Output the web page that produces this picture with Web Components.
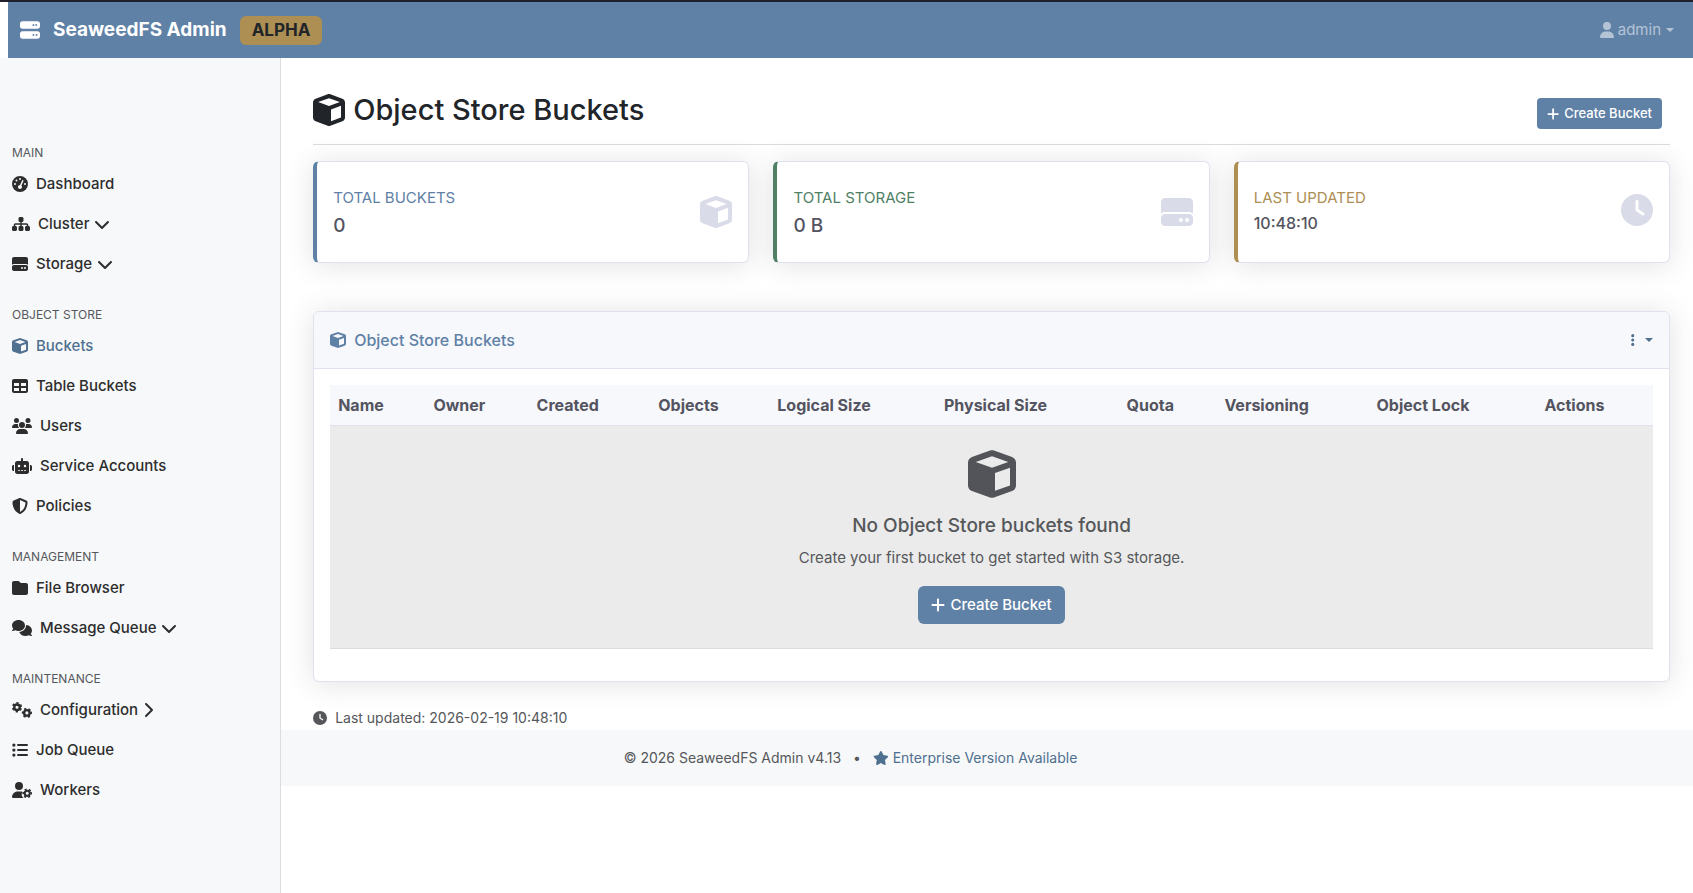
<!DOCTYPE html>
<html lang="en">
<head>
<meta charset="utf-8">
<meta name="viewport" content="width=device-width, initial-scale=1">
<title>SeaweedFS Admin – Object Store Buckets</title>
<style>
  :root {
    --primary: #6081a6;
    --link: #4f708f;
    --success: #4f8066;
    --warning: #ad8e53;
    --ink: #212529;
    --nav-ink: #2d2d2d;
    --muted: #55575a;
    --value: #535460;
    --faint: #d9dbe8;
    --surface: #f7f8fa;
    --card-head: #f7f8fc;
    --card-line: #dfe1ee;
    --line: #d9dce0;
    --card-shadow: 0 2px 28px rgba(58, 59, 69, .15);
  }
  body {
    margin: 0;
    background: #fff;
    color: var(--ink);
    font: 400 15px/24px Inter, "Liberation Sans", sans-serif;
  }
</style>
</head>
<body>
<app-shell>
  <app-header slot="header" user="admin">SeaweedFS Admin</app-header>
  <app-sidebar slot="sidebar">
    <nav-section label="MAIN">
      <nav-item icon="gauge">Dashboard</nav-item>
      <nav-item icon="sitemap" toggle="chevron-down">Cluster</nav-item>
      <nav-item icon="drive" toggle="chevron-down">Storage</nav-item>
    </nav-section>
    <nav-section label="OBJECT STORE">
      <nav-item icon="cube" active>Buckets</nav-item>
      <nav-item icon="table">Table Buckets</nav-item>
      <nav-item icon="users">Users</nav-item>
      <nav-item icon="robot">Service Accounts</nav-item>
      <nav-item icon="shield">Policies</nav-item>
    </nav-section>
    <nav-section label="MANAGEMENT">
      <nav-item icon="folder">File Browser</nav-item>
      <nav-item icon="comments" toggle="chevron-down">Message Queue</nav-item>
    </nav-section>
    <nav-section label="MAINTENANCE">
      <nav-item icon="gears" toggle="chevron-right">Configuration</nav-item>
      <nav-item icon="list">Job Queue</nav-item>
      <nav-item icon="user-gear">Workers</nav-item>
    </nav-section>
  </app-sidebar>
  <page-title slot="main" icon="cube">Object Store Buckets<action-button slot="actions" size="small">Create Bucket</action-button></page-title>
  <stat-row slot="main">
    <stat-card tone="primary" icon="cube" label="TOTAL BUCKETS">0</stat-card>
    <stat-card tone="success" icon="drive" label="TOTAL STORAGE">0 B</stat-card>
    <stat-card tone="warning" icon="clock" label="LAST UPDATED" compact>10:48:10</stat-card>
  </stat-row>
  <bucket-panel slot="main"></bucket-panel>
  <updated-note slot="main">Last updated: 2026-02-19 10:48:10</updated-note>
  <app-footer slot="footer"></app-footer>
</app-shell>

<script>
const ICONS = {
  'cube': [512, '<path d="M234.5 5.7c13.9-5 29.1-5 43.1 0l192 68.6C495 83.4 512 107.5 512 134.6l0 242.9c0 27-17 51.2-42.5 60.3l-192 68.6c-13.9 5-29.1 5-43.1 0l-192-68.6C17 428.6 0 404.5 0 377.4L0 134.6c0-27 17-51.2 42.5-60.3l192-68.6zM256 66L82.3 128 256 190l173.7-62L256 66zm32 368.6l160-57.1 0-188L288 246.6l0 188z"/>'],
  'user': [448, '<path d="M224 256A128 128 0 1 0 224 0a128 128 0 1 0 0 256zm-45.7 48C79.8 304 0 383.8 0 482.3C0 498.7 13.3 512 29.7 512l388.6 0c16.4 0 29.7-13.3 29.7-29.7C448 383.8 368.2 304 269.7 304l-91.4 0z"/>'],
  'server': [512, '<path d="M64 32C28.7 32 0 60.7 0 96l0 64c0 35.3 28.7 64 64 64l384 0c35.3 0 64-28.7 64-64l0-64c0-35.3-28.7-64-64-64L64 32zm280 72a24 24 0 1 1 0 48 24 24 0 1 1 0-48zm48 24a24 24 0 1 1 48 0 24 24 0 1 1-48 0zM64 288c-35.3 0-64 28.7-64 64l0 64c0 35.3 28.7 64 64 64l384 0c35.3 0 64-28.7 64-64l0-64c0-35.3-28.7-64-64-64L64 288zm280 72a24 24 0 1 1 0 48 24 24 0 1 1 0-48zm56 24a24 24 0 1 1 48 0 24 24 0 1 1-48 0z"/>'],
  'drive': [512, '<path d="M0 96C0 60.7 28.7 32 64 32l384 0c35.3 0 64 28.7 64 64l0 184.4c-17-15.2-39.4-24.4-64-24.4L64 256c-24.6 0-47 9.2-64 24.4L0 96zM64 288l384 0c35.3 0 64 28.7 64 64l0 64c0 35.3-28.7 64-64 64L64 480c-35.3 0-64-28.7-64-64l0-64c0-35.3 28.7-64 64-64zM320 416a32 32 0 1 0 0-64 32 32 0 1 0 0 64zm128-32a32 32 0 1 0-64 0 32 32 0 1 0 64 0z"/>'],
  'clock': [512, '<path d="M256 0a256 256 0 1 1 0 512A256 256 0 1 1 256 0zM232 120l0 136c0 8 4 15.5 10.7 20l96 64c11 7.4 25.9 4.4 33.3-6.7s4.4-25.9-6.7-33.3L280 243.2 280 120c0-13.3-10.7-24-24-24s-24 10.7-24 24z"/>'],
  'plus': [448, '<path d="M256 80c0-17.7-14.3-32-32-32s-32 14.3-32 32l0 144L48 224c-17.7 0-32 14.3-32 32s14.3 32 32 32l144 0 0 144c0 17.7 14.3 32 32 32s32-14.3 32-32l0-144 144 0c17.7 0 32-14.3 32-32s-14.3-32-32-32l-144 0 0-144z"/>'],
  'sitemap': [576, '<path fill-rule="nonzero" d="M208 80c0-26.5 21.5-48 48-48l64 0c26.5 0 48 21.5 48 48l0 64c0 26.5-21.5 48-48 48l-8 0 0 40 152 0c30.9 0 56 25.1 56 56l0 32 8 0c26.5 0 48 21.5 48 48l0 64c0 26.5-21.5 48-48 48l-64 0c-26.5 0-48-21.5-48-48l0-64c0-26.5 21.5-48 48-48l8 0 0-32c0-4.4-3.6-8-8-8l-152 0 0 40 8 0c26.5 0 48 21.5 48 48l0 64c0 26.5-21.5 48-48 48l-64 0c-26.5 0-48-21.5-48-48l0-64c0-26.5 21.5-48 48-48l8 0 0-40-152 0c-4.4 0-8 3.6-8 8l0 32 8 0c26.5 0 48 21.5 48 48l0 64c0 26.5-21.5 48-48 48l-64 0c-26.5 0-48-21.5-48-48l0-64c0-26.5 21.5-48 48-48l8 0 0-32c0-30.9 25.1-56 56-56l152 0 0-40-8 0c-26.5 0-48-21.5-48-48l0-64z"/>'],
  'gauge': [512, '<path d="M0 256a256 256 0 1 1 512 0A256 256 0 1 1 0 256zM288 96a32 32 0 1 0-64 0 32 32 0 1 0 64 0zM256 416c35.3 0 64-28.7 64-64c0-17.4-6.9-33.1-18.1-44.6L366 161.7c5.3-12.1-.2-26.3-12.3-31.6s-26.3 .2-31.6 12.3L257.9 288c-.6 0-1.3 0-1.9 0c-35.3 0-64 28.7-64 64s28.7 64 64 64zM176 144a32 32 0 1 0-64 0 32 32 0 1 0 64 0zM96 288a32 32 0 1 0 0-64 32 32 0 1 0 0 64zm352-32a32 32 0 1 0-64 0 32 32 0 1 0 64 0z"/>'],
  'table': [512, '<path d="M64 256l0-96 160 0 0 96L64 256zm0 64l160 0 0 96L64 416l0-96zm224 96l0-96 160 0 0 96-160 0zM448 256l-160 0 0-96 160 0 0 96zM64 32C28.7 32 0 60.7 0 96L0 416c0 35.3 28.7 64 64 64l384 0c35.3 0 64-28.7 64-64l0-320c0-35.3-28.7-64-64-64L64 32z"/>'],
  'users': [640, '<path d="M144 0a80 80 0 1 1 0 160A80 80 0 1 1 144 0zM512 0a80 80 0 1 1 0 160A80 80 0 1 1 512 0zM0 298.7C0 239.8 47.8 192 106.7 192l42.7 0c15.9 0 31 3.5 44.6 9.7c-1.3 7.2-1.9 14.7-1.9 22.3c0 38.2 16.8 72.5 43.3 96L21.3 320C9.6 320 0 310.4 0 298.7zM405.3 320c25.9-23.5 42.6-57.8 42.6-96c0-7.6-.7-15-1.9-22.3c13.6-6.3 28.7-9.7 44.6-9.7l42.7 0C592.2 192 640 239.8 640 298.7c0 11.8-9.6 21.3-21.3 21.3l-213.3 0zM224 224a96 96 0 1 1 192 0 96 96 0 1 1-192 0zM128 485.3C128 411.7 187.7 352 261.3 352l117.3 0C452.3 352 512 411.7 512 485.3c0 14.7-11.9 26.7-26.7 26.7l-330.7 0c-14.7 0-26.7-11.9-26.7-26.7z"/>'],
  'robot': [640, '<path d="M320 0c17.7 0 32 14.3 32 32l0 64 120 0c39.8 0 72 32.2 72 72l0 272c0 39.8-32.2 72-72 72l-304 0c-39.8 0-72-32.2-72-72l0-272c0-39.8 32.2-72 72-72l120 0 0-64c0-17.7 14.3-32 32-32zM208 384c-8.8 0-16 7.2-16 16s7.2 16 16 16l32 0c8.8 0 16-7.2 16-16s-7.2-16-16-16l-32 0zm96 0c-8.8 0-16 7.2-16 16s7.2 16 16 16l32 0c8.8 0 16-7.2 16-16s-7.2-16-16-16l-32 0zm96 0c-8.8 0-16 7.2-16 16s7.2 16 16 16l32 0c8.8 0 16-7.2 16-16s-7.2-16-16-16l-32 0zM264 256a40 40 0 1 0-80 0 40 40 0 1 0 80 0zm152 40a40 40 0 1 0 0-80 40 40 0 1 0 0 80zM48 224l16 0 0 192-16 0c-26.5 0-48-21.5-48-48l0-96c0-26.5 21.5-48 48-48zm544 0c26.5 0 48 21.5 48 48l0 96c0 26.5-21.5 48-48 48l-16 0 0-192 16 0z"/>'],
  'shield': [512, '<path d="M256 0c4.6 0 9.2 1 13.4 2.9L457.7 82.8c22 9.3 38.4 31 38.3 57.2c-.5 99.2-41.3 280.7-213.6 363.2c-16.7 8-36.1 8-52.8 0C57.3 420.7 16.5 239.2 16 140c-.1-26.2 16.3-47.9 38.3-57.2L242.7 2.9C246.8 1 251.4 0 256 0zm0 66.8l0 378.1C394 378 431.1 230.1 432 141.4L256 66.8z"/>'],
  'folder': [512, '<path d="M64 480H448c35.3 0 64-28.7 64-64V160c0-35.3-28.7-64-64-64H288c-10.1 0-19.6-4.7-25.6-12.8L243.2 57.6C231.1 41.5 212.1 32 192 32H64C28.7 32 0 60.7 0 96V416c0 35.3 28.7 64 64 64z"/>'],
  'comments': [640, '<path fill-rule="nonzero" d="M208 352c114.9 0 208-78.8 208-176S322.9 0 208 0S0 78.8 0 176c0 38.6 14.7 74.3 39.6 103.4c-3.5 9.4-8.7 17.7-14.2 24.7c-4.8 6.2-9.7 11-13.3 14.3c-1.8 1.6-3.3 2.9-4.3 3.7l-1.3 1C1 327.2-1.4 334.4 .8 340.9S9.1 352 16 352c21.8 0 43.8-5.6 62.1-12.5c9.2-3.5 17.8-7.4 25.2-11.4C134.1 343.3 169.8 352 208 352zM448 176c0 112.3-99.1 196.9-216.5 207C255.8 457.4 336.4 512 432 512c38.2 0 73.9-8.7 104.7-23.9c7.5 4 16 7.9 25.2 11.4c18.3 6.9 40.3 12.5 62.1 12.5c6.9 0 13.1-4.5 15.2-11.1c2.1-6.6-.2-13.8-5.8-17.9l-1.3-1c-1-.8-2.5-2-4.3-3.7c-3.6-3.3-8.5-8.1-13.3-14.3c-5.5-7-10.7-15.4-14.2-24.7c24.9-29 39.6-64.7 39.6-103.4c0-92.8-84.9-168.9-192.6-175.5c.4 5.1 .6 10.3 .6 15.5z"/>'],
  'gears': [640, '<g fill="none" stroke="currentColor"><circle cx="160" cy="168" r="88" stroke-width="76"/><circle cx="160" cy="168" r="136" stroke-width="56" pathLength="12" stroke-dasharray="1 1" transform="rotate(15 160 168)"/><circle cx="476" cy="348" r="88" stroke-width="76"/><circle cx="476" cy="348" r="136" stroke-width="56" pathLength="12" stroke-dasharray="1 1" transform="rotate(-15 476 348)"/></g>'],
  'list': [512, '<circle cx="60" cy="96" r="52"/><circle cx="60" cy="256" r="52"/><circle cx="60" cy="416" r="52"/><path d="M192 64a32 32 0 0 0 0 64h288a32 32 0 0 0 0-64zM192 224a32 32 0 0 0 0 64h288a32 32 0 0 0 0-64zM192 384a32 32 0 0 0 0 64h288a32 32 0 0 0 0-64z"/>'],
  'user-gear': [640, '<path d="M224 256A128 128 0 1 0 224 0a128 128 0 1 0 0 256zm-45.7 48C79.8 304 0 383.8 0 482.3C0 498.7 13.3 512 29.7 512H372c-42-28-62-64-62-112c0-34 10-62 28-84c-20-8-44-12-68.3-12z"/><g fill="none" stroke="currentColor"><circle cx="488" cy="362" r="82" stroke-width="66"/><circle cx="488" cy="362" r="130" stroke-width="50" pathLength="12" stroke-dasharray="1 1" transform="rotate(-15 488 362)"/></g>'],
  'star': [576, '<path d="M316.9 18C311.6 7 300.4 0 288.1 0s-23.4 7-28.8 18L195 150.3 51.4 171.5c-12 1.8-22 10.2-25.7 21.7s-.7 24.2 7.9 32.7L137.8 329 113.2 474.7c-2 12 3 24.2 12.9 31.3s23 8 33.8 2.3l128.3-68.5 128.3 68.5c10.8 5.7 23.9 4.9 33.8-2.3s14.9-19.3 12.9-31.3L438.5 329 542.7 225.9c8.6-8.5 11.7-21.2 7.9-32.7s-13.7-19.9-25.7-21.7L381.2 150.3 316.9 18z"/>'],
  'ellipsis': [128, '<circle cx="64" cy="96" r="56"/><circle cx="64" cy="256" r="56"/><circle cx="64" cy="416" r="56"/>'],
  'chevron-down': [512, '<path d="M233.4 406.6c12.5 12.5 32.8 12.5 45.3 0l192-192c12.5-12.5 12.5-32.8 0-45.3s-32.8-12.5-45.3 0L256 338.7 86.6 169.4c-12.5-12.5-32.8-12.5-45.3 0s-12.5 32.8 0 45.3l192 192z"/>'],
  'chevron-right': [320, '<path d="M310.6 233.4c12.5 12.5 12.5 32.8 0 45.3l-192 192c-12.5 12.5-32.8 12.5-45.3 0s-12.5-32.8 0-45.3L242.7 256 73.4 86.6c-12.5-12.5-12.5-32.8 0-45.3s32.8-12.5 45.3 0l192 192z"/>'],
  'caret': [512, '<path d="M0 128h512L256 384z"/>']
};

/* Registers an element whose shadow root is rendered from its attributes. */
function define(tag, render) {
  customElements.define(tag, class extends HTMLElement {
    constructor() {
      super();
      this.attachShadow({ mode: 'open' });
    }
    connectedCallback() {
      const template = document.createElement('template');
      template.innerHTML = render(this);
      this.shadowRoot.replaceChildren(template.content.cloneNode(true));
    }
  });
}

define('ui-icon', el => {
  const [width, body] = ICONS[el.getAttribute('name')];
  return `<style>
    :host { display: inline-flex; flex: none; --icon-size: 16px; }
    svg { display: block; height: var(--icon-size); fill: currentColor; fill-rule: evenodd; overflow: visible; }
  </style><svg viewBox="0 0 ${width} 512" aria-hidden="true">${body}</svg>`;
});

define('app-shell', () => `<style>
    :host { display: flex; flex-direction: column; min-height: 100vh; }
    .body { flex: 1; display: grid; grid-template-columns: calc(100% / 6 - 1px) 1fr; grid-template-rows: auto 1fr; }
    .side { grid-area: 1 / 1 / 3 / 2; z-index: 1; display: flex; }
    main { grid-area: 1 / 2; padding: 33px 23px 0 32px; min-width: 0; }
    .foot { grid-area: 2 / 1 / 3 / 3; }
  </style>
  <slot name="header"></slot>
  <div class="body">
    <div class="side"><slot name="sidebar"></slot></div>
    <main><slot name="main"></slot></main>
    <div class="foot"><slot name="footer"></slot></div>
  </div>`);

define('app-header', el => `<style>
    :host { display: block; border-top: 2px solid #1f1f2e; padding-left: 8px; }
    header { display: flex; align-items: center; justify-content: space-between; height: 56px; padding: 0 19px 0 12px; background: var(--primary); }
    .brand { display: flex; align-items: center; gap: 13px; color: #fff; font-size: 19px; font-weight: 700; text-decoration: none; }
    .brand ui-icon { --icon-size: 20px; }
    .badge { padding: 0 12px; border-radius: 6px; background: var(--warning); color: var(--ink); font-size: 17px; line-height: 29px; }
    button { display: flex; align-items: center; padding: 0; border: 0; background: none; color: #b4c4d6; font: inherit; }
    button span { margin: 0 5px 0 4px; }
    .caret { --icon-size: 8px; }
  </style>
  <header>
    <a class="brand" href="#"><ui-icon name="server"></ui-icon><slot></slot><span class="badge">ALPHA</span></a>
    <button type="button"><ui-icon name="user"></ui-icon><span>${el.getAttribute('user')}</span><ui-icon class="caret" name="caret"></ui-icon></button>
  </header>`);

define('app-sidebar', () => `<style>
    :host { display: block; flex: 1; box-sizing: border-box; padding-top: 64px; background: var(--surface); border-right: 1px solid var(--line); }
  </style><nav><slot></slot></nav>`);

define('nav-section', el => `<style>
    :host { display: block; padding-top: 23px; }
    h6 { margin: 0 0 3px; padding-left: 12px; color: var(--muted); font-size: 12px; font-weight: 400; line-height: 16px; }
  </style><h6>${el.getAttribute('label')}</h6><slot></slot>`);

define('nav-item', el => {
  const toggle = el.getAttribute('toggle');
  return `<style>
    :host { display: block; color: var(--nav-ink); }
    :host([active]) { color: var(--link); }
    a { display: flex; align-items: center; padding: 8px 12px; color: inherit; font-weight: 500; text-decoration: none; }
    span { margin: 0 5px 0 8px; }
  </style><a href="#"><ui-icon name="${el.getAttribute('icon')}"></ui-icon><span><slot></slot></span>${toggle ? `<ui-icon name="${toggle}"></ui-icon>` : ''}</a>`;
});

define('action-button', () => `<style>
    :host { display: inline-flex; }
    button { display: flex; align-items: center; gap: 5px; padding: 7px 13px; border: 0; border-radius: 6px; background: var(--primary); color: #fff; font: inherit; font-weight: 500; }
    :host([size="small"]) button { padding: 4px 10px; border-radius: 4px; font-size: 13px; line-height: 23px; }
    :host([size="small"]) ui-icon { --icon-size: 14px; }
  </style><button type="button"><ui-icon name="plus"></ui-icon><slot></slot></button>`);

define('page-title', el => `<style>
    :host { display: flex; align-items: flex-end; justify-content: space-between; padding: 0 8px 15px 0; border-bottom: 1px solid var(--line); margin-bottom: 16px; }
    h1 { display: flex; align-items: center; gap: 8px; margin: 0; font-size: 29px; font-weight: 500; line-height: 38px; }
    ui-icon { --icon-size: 32px; }
  </style><h1><ui-icon name="${el.getAttribute('icon')}"></ui-icon><slot></slot></h1><slot name="actions"></slot>`);

define('stat-row', () => `<style>
    :host { display: grid; grid-template-columns: repeat(3, 1fr); gap: 24px; margin-bottom: 48px; }
  </style><slot></slot>`);

define('stat-card', el => `<style>
    :host { display: block; box-sizing: border-box; padding: 24px 16px; background: #fff; border: 1px solid var(--card-line); border-left: 4px solid var(--tone); border-radius: 6px; box-shadow: var(--card-shadow); --tone: var(--${el.getAttribute('tone')}); }
    .row { display: flex; align-items: center; justify-content: space-between; }
    .label { color: var(--tone); }
    .value { margin-top: 4px; color: var(--value); font-size: 19px; font-weight: 500; line-height: 24px; }
    :host([compact]) .value { font-size: 16px; line-height: 19px; }
    ui-icon { --icon-size: 32px; color: var(--faint); }
  </style><div class="row"><div><div class="label">${el.getAttribute('label')}</div><div class="value"><slot></slot></div></div><ui-icon name="${el.getAttribute('icon')}"></ui-icon></div>`);

define('empty-state', () => `<style>
    :host { display: flex; flex-direction: column; align-items: center; padding: 24px 0; color: var(--muted); }
    ui-icon { --icon-size: 48px; color: #535459; }
    h5 { margin: 16px 0 8px; font-size: 19px; font-weight: 500; line-height: 24px; }
    p { margin: 0 0 16px; }
  </style>
  <ui-icon name="cube"></ui-icon>
  <h5>No Object Store buckets found</h5>
  <p>Create your first bucket to get started with S3 storage.</p>
  <action-button>Create Bucket</action-button>`);

define('bucket-panel', () => {
  const columns = [['Name', 7.2], ['Owner', 7.8], ['Created', 9.2], ['Objects', 9], ['Logical Size', 12.6], ['Physical Size', 13.8], ['Quota', 7.4], ['Versioning', 11.5], ['Object Lock', 12.7], ['Actions', 8.8]];
  return `<style>
    :host { display: block; margin-bottom: 24px; background: #fff; border: 1px solid var(--card-line); border-radius: 6px; box-shadow: var(--card-shadow); }
    header { display: flex; align-items: center; justify-content: space-between; padding: 16px; background: var(--card-head); border-bottom: 1px solid var(--card-line); border-radius: 5px 5px 0 0; }
    h2 { display: flex; align-items: center; gap: 8px; margin: 0; color: var(--primary); font-size: 16px; font-weight: 500; line-height: 24px; }
    header button { display: flex; align-items: center; gap: 11px; padding: 0; border: 0; background: none; color: var(--link); }
    .dots { --icon-size: 14px; }
    .caret { --icon-size: 8px; }
    .content { padding: 16px 16px 32px; }
    table { width: 100%; table-layout: fixed; border-collapse: separate; border-spacing: 0; }
    th { padding: 8px; background: var(--card-head); border-bottom: 1px solid var(--card-line); color: var(--value); font-size: 16px; font-weight: 700; line-height: 24px; text-align: left; white-space: nowrap; }
    td { padding: 0; background: #ebebeb; border-bottom: 1px solid var(--line); }
  </style>
  <header>
    <h2><ui-icon name="cube"></ui-icon>Object Store Buckets</h2>
    <button type="button" aria-label="Bucket actions"><ui-icon class="dots" name="ellipsis"></ui-icon><ui-icon class="caret" name="caret"></ui-icon></button>
  </header>
  <div class="content">
    <table>
      <colgroup>${columns.map(c => `<col style="width:${c[1]}%">`).join('')}</colgroup>
      <thead><tr>${columns.map(c => `<th scope="col">${c[0]}</th>`).join('')}</tr></thead>
      <tbody><tr><td colspan="10"><empty-state></empty-state></td></tr></tbody>
    </table>
  </div>`;
});

define('updated-note', () => `<style>
    :host { display: flex; align-items: center; gap: 8px; color: var(--muted); font-size: 14px; }
    ui-icon { --icon-size: 14px; }
  </style><ui-icon name="clock"></ui-icon><span><slot></slot></span>`);

define('app-footer', () => `<style>
    :host { display: block; margin-left: 8px; background: var(--surface); }
    footer { display: flex; justify-content: center; gap: 12px; padding: 16px; color: var(--muted); font-size: 14px; }
    a { display: flex; align-items: center; gap: 4px; color: var(--link); text-decoration: none; }
    ui-icon { --icon-size: 14px; }
  </style><footer><span>© 2026 SeaweedFS Admin v4.13</span><span>•</span><a href="#"><ui-icon name="star"></ui-icon>Enterprise Version Available</a></footer>`);
</script>
</body>
</html>
